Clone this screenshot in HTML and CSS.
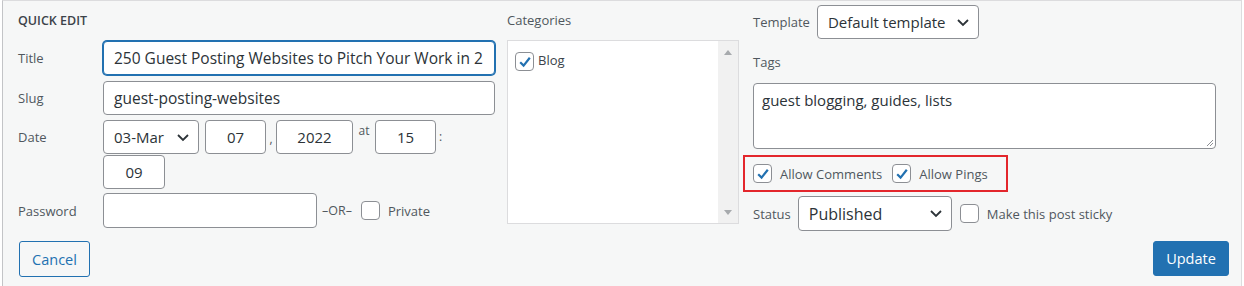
FILE: index.html
```html
<!DOCTYPE html>
<html lang="en">
<head>
<meta charset="utf-8">
<title>Quick Edit</title>
<link rel="stylesheet" href="styles.css">
</head>
<body>
<div class="frame">
  <div class="cols">
    <div class="col left">
      <h2 class="qe-title">QUICK EDIT</h2>
      <div class="row r-title"><span class="lbl">Title</span><div class="field focus wide">250 Guest Posting Websites to Pitch Your Work in 2</div></div>
      <div class="row r-slug"><span class="lbl">Slug</span><div class="field wide">guest-posting-websites</div></div>
      <div class="row r-date"><span class="lbl">Date</span>
        <div class="date-wrap">
          <div class="field sel month">03-Mar<svg class="chev" width="14" height="9" viewBox="0 0 14 9"><path d="M2 2 L7 7 L12 2" fill="none" stroke="#2c3338" stroke-width="1.8"/></svg></div>
          <div class="field num day">07</div><span class="sep comma">,</span>
          <div class="field num year">2022</div><span class="sep at">at</span>
          <div class="field num hour">15</div><span class="sep colon">:</span>
          <div class="field num minute">09</div>
        </div>
      </div>
      <div class="row r-pass"><span class="lbl">Password</span><div class="field pass"></div><span class="or">–OR–</span><span class="cb"></span><span class="cb-lbl">Private</span></div>
    </div>
    <div class="col mid">
      <div class="col-head">Categories</div>
      <div class="cat-box">
        <div class="cat-list">
          <div class="cat-item"><span class="cb checked"><svg width="16" height="16" viewBox="0 0 16 16"><path d="M3.2 8.2 L6.6 11.6 L12.8 3.8" fill="none" stroke="#2271b1" stroke-width="2.2"/></svg></span><span class="cat-lbl">Blog</span></div>
        </div>
        <div class="scrollbar">
          <svg width="10" height="6" viewBox="0 0 10 6"><path d="M1 6 L5 1 L9 6 Z" fill="#a7aaad"/></svg>
          <svg width="10" height="6" viewBox="0 0 10 6"><path d="M1 0 L5 5 L9 0 Z" fill="#a7aaad"/></svg>
        </div>
      </div>
    </div>
    <div class="col right">
      <div class="row r-tpl"><span class="lbl-s tpl-lbl">Template</span><div class="field sel tpl">Default template<svg class="chev" width="14" height="9" viewBox="0 0 14 9"><path d="M2 2 L7 7 L12 2" fill="none" stroke="#2c3338" stroke-width="1.8"/></svg></div></div>
      <div class="tags-lbl">Tags</div>
      <div class="field tags">guest blogging, guides, lists<svg class="grip" width="9" height="9" viewBox="0 0 9 9"><path d="M8 2 L2 8 M8 5 L5 8" stroke="#8c8f94" stroke-width="1"/></svg></div>
      <div class="allow">
        <span class="cb checked"><svg width="16" height="16" viewBox="0 0 16 16"><path d="M3.2 8.2 L6.6 11.6 L12.8 3.8" fill="none" stroke="#2271b1" stroke-width="2.2"/></svg></span><span class="cb-lbl">Allow Comments</span>
        <span class="cb checked cb2"><svg width="16" height="16" viewBox="0 0 16 16"><path d="M3.2 8.2 L6.6 11.6 L12.8 3.8" fill="none" stroke="#2271b1" stroke-width="2.2"/></svg></span><span class="cb-lbl">Allow Pings</span>
      </div>
      <div class="row r-status"><span class="lbl-s">Status</span><div class="field sel status">Published<svg class="chev" width="14" height="9" viewBox="0 0 14 9"><path d="M2 2 L7 7 L12 2" fill="none" stroke="#2c3338" stroke-width="1.8"/></svg></div><span class="cb"></span><span class="cb-lbl">Make this post sticky</span></div>
    </div>
  </div>
  <div class="footer">
    <button class="btn cancel">Cancel</button>
    <button class="btn update">Update</button>
  </div>
</div>
</body>
</html>
```

FILE: styles.css
```css
* { box-sizing: border-box; }
html, body { margin: 0; padding: 0; background: #fff; }
body {
  font-family: "Open Sans", "Noto Sans", sans-serif;
  color: #50575e;
  font-size: 13px;
}
.frame {
  margin-left: 2px;
  width: 1240px;
  height: 300px;
  background: #f6f7f7;
  border-top: 1px solid #dcdcde;
  border-left: 1px solid #c3c4c7;
  border-right: 1px solid #dcdcde;
  padding: 0 0 0 15px;
}
.cols {
  display: grid;
  grid-template-columns: 477px 232px 475px;
  column-gap: 12px;
}
.cols .right { margin-left: 2px; }
.qe-title {
  margin: 0;
  height: 40px;
  line-height: 39px;
  font-size: 12.5px;
  font-weight: 600;
  color: #3c434a;
}
.row { display: flex; align-items: center; }
.lbl { width: 85px; flex: none; }
.field {
  background: #fff;
  border: 1px solid #8c8f94;
  border-radius: 4px;
  color: #2c3338;
  font-size: 15px;
  height: 34px;
  line-height: 32px;
  padding: 0 10px;
  white-space: nowrap;
  overflow: hidden;
}
.field.focus { border-color: #2271b1; box-shadow: 0 0 0 1px #2271b1; }
.wide { width: 392px; font-size: 15.5px; }
.r-slug { margin-top: 6px; }
.r-date { margin-top: 5px; align-items: flex-start; }
.r-date .lbl { line-height: 34px; }
.date-wrap { display: flex; flex-wrap: wrap; width: 392px; row-gap: 1px; align-items: flex-start; }
.sel { display: flex; align-items: center; justify-content: space-between; }
.chev { flex: none; }
.month { width: 96px; padding-right: 8px; }
.num { text-align: center; padding: 0; }
.day { width: 61px; margin-left: 6px; }
.year { width: 77px; }
.hour { width: 61px; }
.minute { width: 62px; }
.sep { color: #50575e; font-size: 12px; text-align: center; height: 34px; }
.comma { width: 10px; line-height: 38px; }
.at { width: 22px; line-height: 22px; }
.colon { width: 20px; line-height: 34px; text-align: left; padding-left: 3px; }
.r-pass { margin-top: 4px; }
.pass { width: 214px; height: 35px; }
.or { margin-left: 5px; font-size: 12.5px; }
.cb {
  display: inline-flex;
  align-items: center;
  justify-content: center;
  width: 19px;
  height: 19px;
  background: #fff;
  border: 1px solid #8c8f94;
  border-radius: 4px;
  flex: none;
}
.r-pass .cb { margin-left: 9px; }
.cb-lbl { margin-left: 8px; }

.col-head { height: 39px; line-height: 39px; }
.cat-box {
  display: flex;
  height: 184px;
  background: #fff;
  border: 1px solid #dcdcde;
}
.cat-list { flex: 1; padding: 11px 0 0 7px; }
.cat-item { display: flex; align-items: center; }
.cat-lbl { margin-left: 4px; color: #3c434a; margin-top: -4px; }
.scrollbar {
  width: 20px;
  background: #f1f1f1;
  display: flex;
  flex-direction: column;
  justify-content: space-between;
  align-items: center;
  padding: 8px 0 7px;
}

.right { padding-top: 4px; }
.lbl-s { margin-right: 10px; flex: none; }
.tpl-lbl { margin-right: 7px; }
.tpl { width: 162px; height: 34px; padding-left: 10px; padding-right: 8px; }
.tags-lbl { margin-top: 13px; height: 31px; line-height: 20px; }
.tags {
  position: relative;
  width: 463px;
  height: 66px;
  line-height: 20px;
  padding: 6px 8px;
}
.grip { position: absolute; right: 1px; bottom: 1px; }
.allow {
  display: flex;
  align-items: center;
  width: 265px;
  height: 37px;
  margin-top: 6px;
  margin-left: -10px;
  padding-left: 8px;
  border: 2px solid #e3262c;
}
.allow .cb-lbl { color: #50575e; }
.cb2 { margin-left: 10px; }
.r-status { margin-top: 4px; }
.status { width: 154px; height: 35px; font-size: 16px; padding-right: 8px; margin-left: -3px; }
.r-status .cb { margin-left: 8px; }

.footer {
  display: flex;
  justify-content: space-between;
  width: 1211px;
  margin-top: 10px;
  padding-left: 1px;
}
.btn {
  font-family: inherit;
  font-size: 14.5px;
  height: 36px;
  border-radius: 3px;
  padding: 0 12px;
  cursor: pointer;
}
.cancel { background: #f6f7f7; color: #2271b1; border: 1px solid #2271b1; width: 71px; }
.update { background: #2271b1; color: #fff; border: 1px solid #2271b1; width: 76px; height: 35px; }
```
